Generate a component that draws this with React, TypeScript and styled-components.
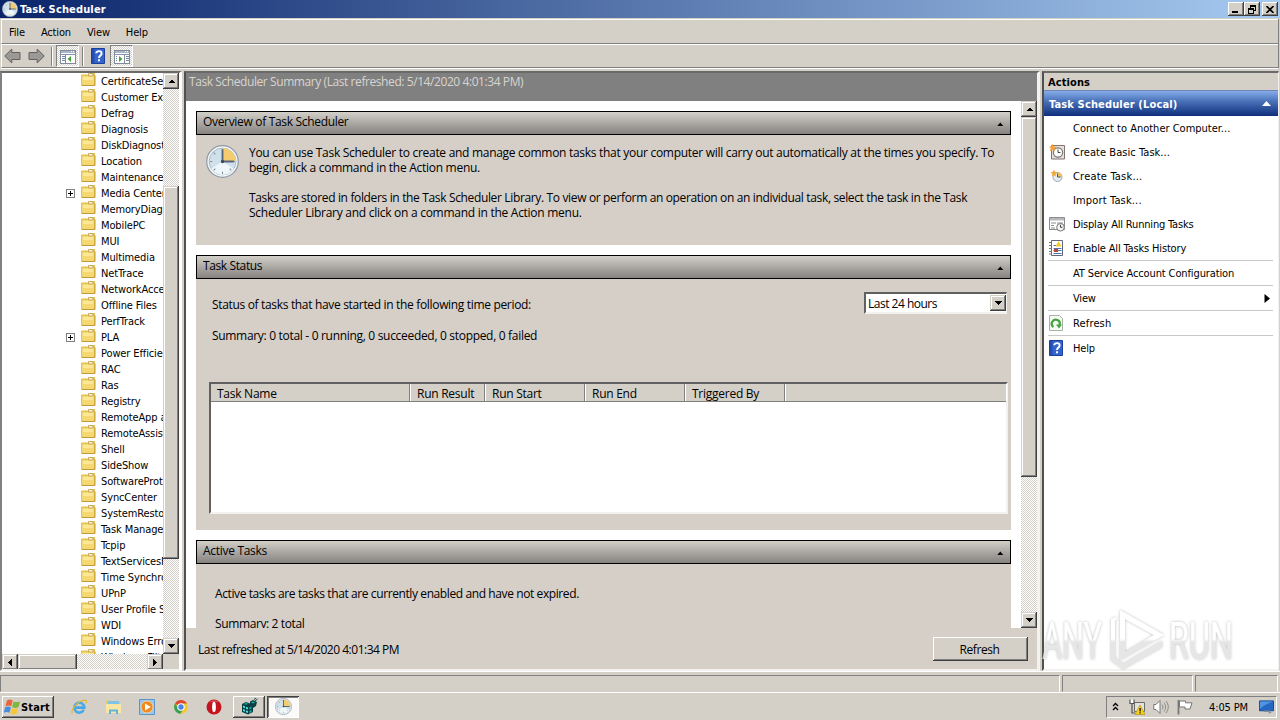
import React from "react";
import styled, { createGlobalStyle, css } from "styled-components";

const face = "#d4d0c8";

const GlobalStyle = createGlobalStyle`
    * {
        box-sizing: border-box;
    }

    body {
        margin: 0;
        overflow: hidden;
        background: ${face};
        color: #000;
        font-family: "DejaVu Sans Condensed", "DejaVu Sans", sans-serif;
        font-size: 11px;
        line-height: 14px;
    }

    svg {
        display: block;
        flex: none;
    }
`;

const raised = css`
    background: ${face};
    box-shadow: inset -1px -1px #404040, inset 1px 1px ${face}, inset -2px -2px #808080, inset 2px 2px #fff;
`;

const pushed = css`
    background: ${face};
    box-shadow: inset -1px -1px #404040, inset 1px 1px #fff, inset -2px -2px #808080;
`;

const dither = css`
    background: repeating-conic-gradient(#fff 0 25%, ${face} 0 50%) 0 0 / 2px 2px;
`;

const Desktop = styled.div`
    display: flex;
    flex-direction: column;
    width: 1280px;
    height: 720px;
    overflow: hidden;
    background: ${face};
`;

const Label = styled.span<{ $track?: number }>`
    padding-top: 2px;
    white-space: nowrap;
    letter-spacing: ${(p) => p.$track ?? -0.12}px;
`;

const UiLabel = styled(Label)`
    padding-top: 0;
    font-family: "Open Sans", "Noto Sans", sans-serif;
    font-size: 12px;
    line-height: 15px;
`;

/* title bar */

const TitleBar = styled.header`
    display: flex;
    align-items: center;
    height: 18px;
    padding: 0 2px;
    background: linear-gradient(90deg, #0a246a, #a6caf0);
    color: #fff;
    font-weight: bold;
`;

const TitleText = styled(Label)`
    margin-left: 2px;
    flex: 1;
`;

const CaptionButton = styled.span<{ $gap?: number }>`
    ${pushed}
    display: flex;
    align-items: center;
    justify-content: center;
    width: 16px;
    height: 14px;
    margin-left: ${(p) => p.$gap ?? 0}px;
`;

/* menu and toolbar */

const MenuBar = styled.nav`
    display: flex;
    align-items: center;
    gap: 16px;
    height: 25px;
    margin: 1px 2px 0 1px;
    padding-left: 7px;
    border: 1px solid #fff;
    border-width: 1px 0 0 1px;
    border-bottom: 1px solid #808080;
    box-shadow: 1px 0 #808080;
`;

const ToolBar = styled.div`
    display: flex;
    align-items: center;
    height: 24px;
    margin: 0 2px 0 1px;
    padding-left: 2px;
    border: 1px solid #fff;
    border-width: 1px 0 0 1px;
    border-bottom: 1px solid #808080;
    box-shadow: 1px 0 #808080, 0 1px #fff;
`;

const ToolGap = styled.span<{ $w: number }>`
    width: ${(p) => p.$w}px;
`;

const ToolSeparator = styled.span`
    width: 2px;
    height: 19px;
    border-left: 1px solid #808080;
    border-right: 1px solid #fff;
`;

const ToggleButton = styled.span`
    display: flex;
    align-items: center;
    justify-content: center;
    width: 23px;
    height: 22px;
    padding: 2px 0 0 1px;
    border: 1px solid;
    border-color: #808080 #fff #fff #808080;
    ${dither}
`;

/* panes */

const Panes = styled.main`
    display: flex;
    height: 600px;
    margin-top: 3px;
    padding-right: 1px;
`;

const Sunken = styled.section`
    display: flex;
    flex-direction: column;
    border: 2px solid;
    border-color: #6a6a6a #f4f2ee #f4f2ee #505050;
    overflow: hidden;
`;

const TreePane = styled(Sunken)`
    width: 182px;
    border-left-color: #808080;
    border-right-width: 3px;
    border-right-color: #fff;
`;

const TreeTop = styled.div`
    display: flex;
    height: 581px;
`;

const TreeList = styled.ul`
    width: 161px;
    margin: 0;
    padding: 0;
    list-style: none;
    overflow: hidden;
    background: #fff;
`;

const TreeItem = styled.li`
    display: grid;
    grid-template-columns: 64px 15px 20px auto;
    align-items: center;
    height: 16px;
    white-space: nowrap;

    .folder {
        margin-top: -4px;
    }
`;

const Expander = styled.span`
    display: flex;
    align-items: center;
    justify-content: center;
    width: 9px;
    height: 9px;
    border: 1px solid #808080;
`;

const VScroll = styled.div`
    display: flex;
    flex-direction: column;
    width: 16px;
    flex: none;
    ${dither}
`;

const HScroll = styled.div`
    display: flex;
    width: 161px;
    height: 16px;
    ${dither}
`;

const ScrollButton = styled.span`
    ${raised}
    display: flex;
    align-items: center;
    justify-content: center;
    width: 16px;
    height: 16px;
    flex: none;
`;

const Thumb = styled.span<{ $before?: number; $size: number; $across?: boolean }>`
    ${raised}
    flex: none;
    ${(p) =>
        p.$across
            ? css`
                  width: ${p.$size}px;
                  height: 16px;
              `
            : css`
                  width: 16px;
                  height: ${p.$size}px;
                  margin-top: ${p.$before ?? 0}px;
              `}
`;

const Spring = styled.span`
    flex: 1;
`;

const SummaryPane = styled(Sunken)`
    width: 856px;
    margin-left: 2px;
    border-right-width: 3px;
`;

const SummaryTitle = styled.div`
    height: 28px;
    flex: none;
    padding: 1px 3px;
    background: #808080;
    color: #d8d5cf;
`;

const SummaryScroll = styled.div`
    display: flex;
    height: 527px;
    flex: none;
    background: #fff;
`;

const Sections = styled.div`
    display: flex;
    flex-direction: column;
    gap: 10px;
    flex: 1;
    padding: 10px 10px 0;
    overflow: hidden;
`;

const Section = styled.article<{ $height: number }>`
    height: ${(p) => p.$height}px;
    flex: none;
    background: #d5cfc8;
`;

const SectionHead = styled.h2`
    display: flex;
    align-items: center;
    justify-content: space-between;
    height: 24px;
    margin: 0;
    padding: 0 6px 3px;
    border: 1px solid #000;
    background: linear-gradient(#d2cfc8, #858280);
    font-weight: normal;

    svg {
        margin-top: 4px;
    }
`;

const Overview = styled.div`
    display: flex;
    gap: 10px;
    padding: 10px;
`;

const Prose = styled.div`
    display: flex;
    flex-direction: column;
    gap: 15px;
`;

const Paragraph = styled.div`
    display: flex;
    flex-direction: column;
`;

const StatusLine = styled.div`
    display: flex;
    align-items: flex-end;
    justify-content: space-between;
    padding: 13px 4px 0 16px;
    height: 35px;

    > span {
        padding-bottom: 2px;
    }
`;

const TextLine = styled.div<{ $top: number; $left: number }>`
    padding: ${(p) => p.$top}px 0 0 ${(p) => p.$left}px;
    line-height: 15px;
`;

const Combo = styled.div`
    display: flex;
    align-items: center;
    justify-content: space-between;
    width: 143px;
    height: 22px;
    padding-left: 2px;
    border: 2px solid;
    border-right-width: 1px;
    border-color: #606060 #f4f2ee #f4f2ee #606060;
    background: #fff;
`;

const Grid = styled.div`
    height: 132px;
    margin: 38px 3px 0 13px;
    border: 2px solid;
    border-color: #606060 #f4f2ee #f4f2ee #606060;
    background: #fff;
`;

const GridHead = styled.div`
    display: grid;
    grid-template-columns: 199px 75px 100px 100px 100px 1fr;
    height: 18px;
    background: ${face};
    border-bottom: 1px solid #808080;
`;

const GridCell = styled.span`
    display: flex;
    align-items: center;
    padding: 2px 0 0 7px;
    border-right: 1px solid #808080;
    box-shadow: 1px 0 #fff;

    &:first-child {
        padding-left: 6px;
    }

    &:last-child {
        border: 0;
    }
`;

const SummaryFooter = styled.footer`
    display: flex;
    align-items: center;
    justify-content: space-between;
    flex: 1;
    padding: 1px 9px 0 12px;
    background: #d5cfc8;
`;

const PushButton = styled.span`
    ${pushed}
    display: flex;
    align-items: center;
    justify-content: center;
    width: 95px;
    height: 24px;
    padding-right: 2px;
`;

/* actions */

const ActionsPane = styled(Sunken)`
    flex: 1;
    margin-left: 2px;
    border-right-width: 1px;
    background: #fff;
`;

const ActionsTitle = styled.div`
    height: 17px;
    padding: 3px 4px 0;
    background: ${face};
    font-weight: bold;
`;

const ActionsGroup = styled.div`
    display: flex;
    align-items: center;
    justify-content: space-between;
    height: 26px;
    padding: 0 7px 0 5px;
    border-top: 1px solid #6d86b4;
    background: linear-gradient(#86ace8, #4a73ba 40%, #0f2f7c);
    color: #fff;
    font-weight: bold;
`;

const ActionRow = styled.div<{ $ruled?: boolean }>`
    display: grid;
    grid-template-columns: 24px 1fr auto;
    align-items: center;
    height: ${(p) => (p.$ruled ? 25 : 24)}px;
    margin: 0 5px 0 4px;
    padding: 0 3px 0 1px;
    border-bottom: ${(p) => (p.$ruled ? "1px solid #c8c8c8" : "0")};
`;

/* status bar */

const StatusBar = styled.div`
    display: grid;
    grid-template-columns: 1060px 131px 83px;
    gap: 2px;
    height: 22px;
    padding-top: 3px;
    border-top: 1px solid #fff;
    border-bottom: 1px solid #fff;
`;

const StatusCell = styled.span`
    border: 1px solid;
    border-color: #808080 #fff ${face} #808080;
`;

/* taskbar */

const TaskBar = styled.div`
    display: flex;
    align-items: center;
    height: 27px;
    padding: 2px 3px 2px 2px;
`;

const StartButton = styled.span`
    ${pushed}
    display: flex;
    align-items: center;
    width: 52px;
    height: 22px;
    padding-left: 2px;
    font-weight: bold;
`;

const QuickLaunch = styled.div`
    display: flex;
    align-items: center;
    gap: 17.5px;
    margin-left: 17px;
    width: 162px;
`;

const TaskButton = styled.span<{ $active?: boolean }>`
    ${pushed}
    display: flex;
    align-items: center;
    justify-content: center;
    width: 32px;
    height: 22px;
    margin-right: 2px;
    ${(p) =>
        p.$active &&
        css`
            background: #fbfaf8;
            box-shadow: inset 1px 1px #404040, inset -1px -1px #fff, inset 2px 2px #808080;
        `}
`;

const Tray = styled.div`
    display: flex;
    align-items: center;
    width: 171px;
    height: 22px;
    margin-left: auto;
    padding-left: 5px;
    border: 1px solid;
    border-color: #808080 #fff #fff #808080;

    svg + svg {
        margin-left: 10px;
    }

    svg + svg + svg {
        margin-left: 8px;
    }
`;

const Clock = styled(Label)`
    margin: 0 11px 0 16px;
`;

const Watermark = styled.svg`
    position: absolute;
    left: 1040px;
    top: 600px;
    pointer-events: none;
`;

/* icons */

type Dir = "up" | "down" | "left" | "right";
const arrows: Record<Dir, string> = {
    up: "M0 4h7L3.5 .5z",
    down: "M0 0h7L3.5 3.8z",
    left: "M4 0v7L.4 3.5z",
    right: "M0 0v7l3.7-3.5z",
};

const Arrow = ({ dir }: { dir: Dir }) => (
    <svg width={dir === "up" || dir === "down" ? 7 : 4} height={dir === "up" || dir === "down" ? 4 : 7} shapeRendering="crispEdges">
        <path d={arrows[dir]} />
    </svg>
);

const MenuArrow = () => (
    <svg width="6" height="9"><path d="M.5 0v9L6 4.5z" /></svg>
);

const Chevron = () => (
    <svg width="7" height="4"><path d="M.3 4h6L3.3 .6z" /></svg>
);

const Folder = () => (
    <svg className="folder" width="15" height="15" viewBox="0 0 15 15">
        <path d="M1 2.5h7.5l1-1.5H14v12.5H1z" fill="#e6c34f" />
        <path d="M1 4h12v9H1z" fill="#f3d873" />
        <path d="M2 5h10v3H2z" fill="#fbe896" />
        <path d="M7.5 1.5H12V4H7.5z" fill="#f7efcf" stroke="#b99a3c" strokeWidth=".7" />
        <path d="M.5 13.5H14V3.5" fill="none" stroke="#c09a35" />
        <path d="M.5 2.5v11" stroke="#e0c268" />
    </svg>
);

const ClockIcon = ({ size }: { size: number }) => (
    <svg width={size} height={size} viewBox="0 0 32 32">
        <circle cx="16" cy="16" r="15.3" fill="#f4f6f8" stroke="#8d99a5" strokeWidth="1.2" />
        <circle cx="16" cy="16" r="13" fill="#cfe1ea" stroke="#9db1bf" strokeWidth=".8" />
        <path d="M5 23A13 13 0 0 0 27 23L16 16z" fill="#eef6fa" />
        <path d="M16 3a13 13 0 0 1 13 13H16z" fill="#f5cb70" />
        <path d="M16 4v2M16 26v2M4 16h2M26 16h2M7.5 7.5l1.5 1.5M7.5 24.5L9 23M24.5 24.5L23 23" stroke="#7b8d9a" />
        <path d="M16 4v13M15 16h12" stroke="#56657c" strokeWidth="1.8" />
        <circle cx="16" cy="16" r="1.6" fill="#3c485c" />
    </svg>
);

const BackArrow = ({ flip }: { flip?: boolean }) => (
    <svg width="17" height="16" viewBox="0 0 17 16">
        <path
            transform={flip ? "translate(17 0) scale(-1 1)" : undefined}
            d="M.8 8l7-7v3.5H16v7H7.8V15z"
            fill="#9b9995"
            stroke="#62605d"
            strokeLinejoin="round"
        />
    </svg>
);

const PaneIcon = ({ flip }: { flip?: boolean }) => (
    <svg width="16" height="14" viewBox="0 0 16 14" shapeRendering="crispEdges">
        <path d="M.5 .5h15v13H.5z" fill="#fff" stroke="#808b9c" />
        <path d="M1 1h14v2H1z" fill="#a9b4c6" />
        <path d="M11 1h1v1h-1zM13 1h1v1h-1z" fill="#fff" />
        <path d="M1 4.5h14" stroke="#8793a8" />
        {flip ? (
            <>
                <path d="M10.5 5v8" stroke="#808b9c" />
                <path d="M12 6.5h3M12 8.5h3M12 10.5h3M2 6.5h1M2 8.5h1M2 10.5h1" stroke="#7086ad" />
                <path d="M5 6v6l3.5-3z" fill="#43a336" shapeRendering="auto" />
            </>
        ) : (
            <>
                <path d="M5.5 5v8" stroke="#808b9c" />
                <path d="M2 6.5h3M2 8.5h3M2 10.5h3" stroke="#7086ad" />
                <path d="M11 6v6L7.5 9z" fill="#43a336" shapeRendering="auto" />
            </>
        )}
    </svg>
);

const HelpIcon = () => (
    <svg width="14" height="16" viewBox="0 0 14 16">
        <path d="M.5 .5h13v15H.5z" fill="#3465ce" stroke="#1c3f9c" />
        <path d="M1 1h2.5v14H1z" fill="#254fae" />
        <path d="M5.2 5.3C5.2 2.4 10.6 2.4 10.6 5.4 10.6 7.5 8 7.4 8 10" fill="none" stroke="#fff" strokeWidth="1.9" />
        <path d="M7 11.3h2v2H7z" fill="#fff" />
    </svg>
);

const BasicTaskIcon = () => (
    <svg width="16" height="16" viewBox="0 0 16 16">
        <path d="M2.5 1.5h13V15h-13z" fill="#e4e0de" stroke="#857370" />
        <circle cx="9" cy="8.5" r="4.6" fill="#fff" stroke="#777" strokeWidth="1.2" />
        <path d="M9 5.5v3h2.5" fill="none" stroke="#444" />
        <path d="M3.5 -.5l1 2.7L8 3 5.4 4.6 6 7.600 3.500 6 .8 7.200 1.800 4.400 -.2 2.400 2.400 2.400z" fill="#f2a33c" />
    </svg>
);

const TaskIcon = () => (
    <svg width="16" height="16" viewBox="0 0 16 16">
        <circle cx="8.5" cy="9" r="4.5" fill="#e4edf3" stroke="#9ca8b2" />
        <path d="M8.5 4.5A4.500 4.500 0 0 1 13 9H8.5z" fill="#f5c35c" />
        <path d="M8.5 5.5V9h3" fill="none" stroke="#555" />
        <path d="M5 1.500l1 2.200 2.500.5L6.500 6l.5 2.500L5 7.300 2.800 8.500l.5-2.700L1.500 4.300 4 3.800z" fill="#f2a93c" />
    </svg>
);

const RunningIcon = () => (
    <svg width="16" height="16" viewBox="0 0 16 16">
        <path d="M.5 1.5h15v12H.5z" fill="#fff" stroke="#8c8c8c" />
        <path d="M1 2h14v2.5H1z" fill="#b5b9be" />
        <path d="M2 7h5M2 9.5h3M2 12h4M8 7h6" stroke="#8c8c8c" />
        <circle cx="11.5" cy="11.3" r="3.8" fill="#f4f4f4" stroke="#777" />
        <path d="M11.5 8.8v2.5h2" fill="none" stroke="#444" />
    </svg>
);

const HistoryIcon = () => (
    <svg width="14" height="16" viewBox="0 0 14 16">
        <path d="M2.5 .5h11v15h-11z" fill="#fff" stroke="#5f6680" />
        <path d="M0 2.5h3M0 5.5h3M0 8.5h3M0 11.5h3M0 14h3" stroke="#777" />
        <path d="M4.5 5.5h3M4.5 8.5h8M4.5 10.5h8M4.5 13.5h8" stroke="#5470ab" />
        <path d="M9.5 1l3 5.5h-6z" fill="#f3cc2c" />
        <path d="M5 9h4v3H5z" fill="#b34a3a" />
    </svg>
);

const RefreshIcon = () => (
    <svg width="14" height="16" viewBox="0 0 14 16">
        <path d="M.5 .5h10l3 3v12H.5z" fill="#f6faf5" stroke="#a6b3a4" />
        <path d="M4.5 12A4 4 0 1 1 10.5 10" fill="none" stroke="#43a33c" strokeWidth="2.2" />
        <path d="M7 9.5h6l-3 4z" fill="#43a33c" />
    </svg>
);

const StartFlag = () => (
    <svg width="17" height="16" viewBox="0 0 17 16">
        <path d="M3 1.5c2-1.300 3.800-1.200 5.700 0L7.200 7.300C5.300 6.100 3.300 6.100 1.300 7.400z" fill="#e8663a" />
        <path d="M9.600 2.200c2 1.200 4.200 1.200 6.600 0l-1.700 5.800c-2.200 1.300-4.300 1.200-6.400 0z" fill="#7fb840" />
        <path d="M1 8.400c2-1.300 4-1.200 5.900 0l-1.500 5.400c-2-1.200-3.700-1.200-5.700 0z" fill="#4a8ddc" />
        <path d="M7.800 9c2.100 1.200 4.200 1.200 6.400 0l-1.600 5.500c-2.200 1.300-4.100 1.200-6.300 0z" fill="#f6c732" />
    </svg>
);

const IeIcon = () => (
    <svg width="16" height="16" viewBox="0 0 16 16">
        <path d="M12.8 10.8A5 5 0 1 1 13.3 8.6H4" fill="none" stroke="#46a8e6" strokeWidth="2.6" />
        <path d="M1.5 14.5C-1 11 7 1.5 14 1.2c2 .2 1.5 2.3.8 3.3" fill="none" stroke="#e3b63a" strokeWidth="1.2" />
    </svg>
);

const ExplorerIcon = () => (
    <svg width="17" height="16" viewBox="0 0 17 16">
        <path d="M1 3V1.5h5L7 3h8v11H1z" fill="#e7c765" />
        <path d="M3 2h11v5H3z" fill="#7fc4e4" />
        <path d="M1 5h15v9H1z" fill="#f8e6a2" />
        <path d="M4 15v-4.5h9V15h-2v-2.5H6V15z" fill="#62b4dd" />
    </svg>
);

const MediaIcon = () => (
    <svg width="16" height="16" viewBox="0 0 16 16">
        <path d="M.5 .5h15v15H.5z" fill="#9bc7ee" stroke="#5c94cb" />
        <circle cx="8" cy="8" r="6" fill="#f08a1d" stroke="#fbd9a5" strokeWidth=".8" />
        <path d="M6 4.5v7L11.8 8z" fill="#fff" />
    </svg>
);

const ChromeIcon = () => (
    <svg width="16" height="16" viewBox="0 0 16 16">
        <circle cx="8" cy="8" r="6.8" fill="#f5c928" />
        <path d="M8 8L2 4.5A6.9 6.9 0 0 1 14 4.6H8z" fill="#df4634" />
        <path d="M2 4.5A6.9 6.9 0 0 0 7.5 14.8L10.5 9.5 5.5 9z" fill="#39a058" />
        <circle cx="8" cy="8" r="3.2" fill="#4a84ea" stroke="#fff" strokeWidth="1.1" />
    </svg>
);

const OperaIcon = () => (
    <svg width="16" height="16" viewBox="0 0 16 16">
        <circle cx="8" cy="8" r="7.5" fill="#c4141d" />
        <path d="M3 3.5a7.5 7.5 0 0 1 10 0C11 2 5 2 3 3.5z" fill="#e87a7a" />
        <ellipse cx="8" cy="8" rx="1.9" ry="5.2" fill="#fff" />
    </svg>
);

const CubeIcon = () => (
    <svg width="17" height="17" viewBox="0 0 17 17">
        <path d="M1 6l4-2 4 1.5V3.5L12 2l4 2-1 4-3 2v4l-5 2.5L1 14z" fill="#0a3f42" />
        <path d="M2 7.5l2 .8v2l-2-.8zM5 8.7l2 .8v2l-2-.8zM2 11l2 .8v2L2 13zM5 12.2l2 .8v2l-2-.8z" fill="#4fe0dc" />
        <path d="M8.5 9.5l2-1v2l-2 1zM8.5 13l2-1v2l-2 1zM3 6l2-1 2 .8-2 1zM10 4.5l2-1 2 1-2 1z" fill="#1fb0b0" />
        <path d="M13 1.5L15 0M14 3l2.5-2" stroke="#0a3f42" />
    </svg>
);

const TrayExpand = () => (
    <svg width="7" height="9" viewBox="0 0 7 9">
        <path d="M1 4l2.5-2.5L6 4M1 8l2.5-2.5L6 8" fill="none" stroke="#000" strokeWidth="1.3" />
    </svg>
);

const NetworkIcon = () => (
    <svg width="16" height="16" viewBox="0 0 16 16">
        <path d="M5.5 3.5h10v9h-10z" fill="#e4e2dd" stroke="#6c6c6c" />
        <path d="M1 .5v4h4v-4M3 4.5V14h3" fill="none" stroke="#555" strokeWidth="1.2" />
        <path d="M1.8 .5V4h2.4V.5z" fill="#fff" />
        <path d="M11 6l5 9.5H6z" fill="#f8d21c" stroke="#a8860c" strokeWidth=".6" />
        <path d="M10.5 9h1.2v3.5h-1.2zM10.5 13.2h1.2v1.2h-1.2z" />
    </svg>
);

const SpeakerIcon = () => (
    <svg width="16" height="16" viewBox="0 0 16 16">
        <path d="M.8 5.500H3L7 1.500v13L3 10.500H.8z" fill="#fff" stroke="#777" />
        <path d="M9 5.500c1.200 1.500 1.200 3.500 0 5M11 3.500c2 2.700 2 6.300 0 9M13 2c3 3.500 3 8.500 0 12" fill="none" stroke="#8a8a8a" />
    </svg>
);

const FlagIcon = () => (
    <svg width="16" height="16" viewBox="0 0 16 16">
        <path d="M1.5 1v14.5" stroke="#777" strokeWidth="1.8" />
        <path d="M2.5 2h6v1.8H15L13 10H8V8H2.5z" fill="#fff" stroke="#777" />
    </svg>
);

const DesktopIcon = () => (
    <svg width="15" height="14" viewBox="0 0 16 14">
        <path d="M.5 .5h15V11H.5z" fill="#2468c4" stroke="#174688" />
        <path d="M1 1h14C10 3 4 6 1 9z" fill="#4f95e2" />
        <path d="M5 11.5h6V13h2" fill="none" stroke="#7f8fa8" strokeWidth="1.5" />
    </svg>
);

/* data */

const folders = [
    "CertificateServicesClient", "Customer Experience", "Defrag", "Diagnosis", "DiskDiagnostic", "Location",
    "Maintenance", "Media Center", "MemoryDiagnostic", "MobilePC", "MUI", "Multimedia", "NetTrace",
    "NetworkAccessProtection", "Offline Files", "PerfTrack", "PLA", "Power Efficiency", "RAC", "Ras", "Registry",
    "RemoteApp and Desktop", "RemoteAssistance", "Shell", "SideShow", "SoftwareProtection", "SyncCenter",
    "SystemRestore", "Task Manager", "Tcpip", "TextServicesFramework", "Time Synchronization", "UPnP",
    "User Profile Service", "WDI", "Windows Error Reporting", "Windows Filtering Platform",
];
const expandable = ["Media Center", "PLA"];

type Action = { text: string; icon?: React.ReactNode; ruled?: boolean; submenu?: boolean; track?: number };

const actions: Action[] = [
    { text: "Connect to Another Computer...", track: 0 },
    { text: "Create Basic Task...", icon: <BasicTaskIcon />, track: 0.05 },
    { text: "Create Task...", icon: <TaskIcon />, track: 0.2 },
    { text: "Import Task...", track: 0.15 },
    { text: "Display All Running Tasks", icon: <RunningIcon />, track: -0.18 },
    { text: "Enable All Tasks History", icon: <HistoryIcon />, ruled: true, track: -0.16 },
    { text: "AT Service Account Configuration", ruled: true },
    { text: "View", ruled: true, submenu: true, track: -0.2 },
    { text: "Refresh", icon: <RefreshIcon />, ruled: true, track: 0.15 },
    { text: "Help", icon: <HelpIcon />, track: -0.2 },
];

const columns = ["Task Name", "Run Result", "Run Start", "Run End", "Triggered By", ""];

const Heading = ({ text, track }: { text: string; track: number }) => (
    <SectionHead>
        <UiLabel $track={track}>{text}</UiLabel>
        <Chevron />
    </SectionHead>
);

const Tree = () => (
    <TreePane>
        <TreeTop>
            <TreeList>
                {folders.map((name) => (
                    <TreeItem key={name}>
                        <span />
                        {expandable.includes(name) ? (
                            <Expander>
                                <svg width="5" height="5"><path d="M0 2h5v1H0zM2 0h1v5H2z" /></svg>
                            </Expander>
                        ) : (
                            <span />
                        )}
                        <Folder />
                        <Label>{name}</Label>
                    </TreeItem>
                ))}
            </TreeList>
            <VScroll>
                <ScrollButton><Arrow dir="up" /></ScrollButton>
                <Thumb $before={97} $size={373} />
                <Spring />
                <ScrollButton><Arrow dir="down" /></ScrollButton>
            </VScroll>
        </TreeTop>
        <HScroll>
            <ScrollButton><Arrow dir="left" /></ScrollButton>
            <Thumb $across $size={59} />
            <Spring />
            <ScrollButton><Arrow dir="right" /></ScrollButton>
        </HScroll>
    </TreePane>
);

const Summary = () => (
    <SummaryPane>
        <SummaryTitle>
            <UiLabel $track={-0.42}>Task Scheduler Summary (Last refreshed: 5/14/2020 4:01:34 PM)</UiLabel>
        </SummaryTitle>
        <SummaryScroll>
            <Sections>
                <Section $height={134}>
                    <Heading text="Overview of Task Scheduler" track={-0.32} />
                    <Overview>
                        <ClockIcon size={33} />
                        <Prose>
                            <Paragraph>
                                <UiLabel $track={-0.29}>
                                    You can use Task Scheduler to create and manage common tasks that your computer will carry out automatically at the times you specify. To
                                </UiLabel>
                                <UiLabel $track={-0.28}>begin, click a command in the Action menu.</UiLabel>
                            </Paragraph>
                            <Paragraph>
                                <UiLabel $track={-0.35}>
                                    Tasks are stored in folders in the Task Scheduler Library. To view or perform an operation on an individual task, select the task in the Task
                                </UiLabel>
                                <UiLabel $track={-0.27}>Scheduler Library and click on a command in the Action menu.</UiLabel>
                            </Paragraph>
                        </Prose>
                    </Overview>
                </Section>
                <Section $height={275}>
                    <Heading text="Task Status" track={-0.38} />
                    <StatusLine>
                        <UiLabel $track={-0.33}>Status of tasks that have started in the following time period:</UiLabel>
                        <Combo>
                            <UiLabel $track={-0.5}>Last 24 hours</UiLabel>
                            <ScrollButton><Arrow dir="down" /></ScrollButton>
                        </Combo>
                    </StatusLine>
                    <TextLine $top={14} $left={16}>
                        <UiLabel $track={-0.31}>Summary: 0 total - 0 running, 0 succeeded, 0 stopped, 0 failed</UiLabel>
                    </TextLine>
                    <Grid>
                        <GridHead>
                            {columns.map((c) => (
                                <GridCell key={c}><UiLabel $track={-0.26}>{c}</UiLabel></GridCell>
                            ))}
                        </GridHead>
                    </Grid>
                </Section>
                <Section $height={140}>
                    <Heading text="Active Tasks" track={-0.3} />
                    <TextLine $top={22} $left={19}>
                        <UiLabel $track={-0.4}>Active tasks are tasks that are currently enabled and have not expired.</UiLabel>
                    </TextLine>
                    <TextLine $top={14} $left={19}>
                        <UiLabel $track={-0.38}>Summary: 2 total</UiLabel>
                    </TextLine>
                </Section>
            </Sections>
            <VScroll>
                <ScrollButton><Arrow dir="up" /></ScrollButton>
                <Thumb $size={360} />
                <Spring />
                <ScrollButton><Arrow dir="down" /></ScrollButton>
            </VScroll>
        </SummaryScroll>
        <SummaryFooter>
            <UiLabel $track={-0.48}>Last refreshed at 5/14/2020 4:01:34 PM</UiLabel>
            <PushButton><UiLabel $track={-0.4}>Refresh</UiLabel></PushButton>
        </SummaryFooter>
    </SummaryPane>
);

const Actions = () => (
    <ActionsPane>
        <ActionsTitle><Label $track={0.09}>Actions</Label></ActionsTitle>
        <ActionsGroup>
            <Label $track={0.14}>Task Scheduler (Local)</Label>
            <svg width="9" height="5"><path d="M0 5h9L4.5 0z" fill="#fff" /></svg>
        </ActionsGroup>
        {actions.map((a) => (
            <ActionRow key={a.text} $ruled={a.ruled}>
                <span>{a.icon}</span>
                <Label $track={a.track}>{a.text}</Label>
                {a.submenu && <MenuArrow />}
            </ActionRow>
        ))}
    </ActionsPane>
);

export default function App() {
    return (
        <Desktop>
            <GlobalStyle />
            <TitleBar>
                <ClockIcon size={16} />
                <TitleText $track={0.14}>Task Scheduler</TitleText>
                <CaptionButton>
                    <svg width="8" height="8"><path d="M0 6h6v2H0z" /></svg>
                </CaptionButton>
                <CaptionButton>
                    <svg width="9" height="9" shapeRendering="crispEdges">
                        <path d="M2.5 3V.5h5v5H6M2 1.5h6M.5 3.5h5v5h-5zM0 4.5h6" fill="none" stroke="#000" />
                    </svg>
                </CaptionButton>
                <CaptionButton $gap={2}>
                    <svg width="8" height="7"><path d="M.5 0l7 7M7.5 0l-7 7" stroke="#000" strokeWidth="1.6" /></svg>
                </CaptionButton>
            </TitleBar>
            <MenuBar>
                {["File", "Action", "View", "Help"].map((m) => (
                    <Label key={m} $track={-0.15}>{m}</Label>
                ))}
            </MenuBar>
            <ToolBar>
                <BackArrow />
                <ToolGap $w={7} />
                <BackArrow flip />
                <ToolGap $w={6} />
                <ToolSeparator />
                <ToolGap $w={3} />
                <ToggleButton><PaneIcon /></ToggleButton>
                <ToolGap $w={3} />
                <ToolSeparator />
                <ToolGap $w={7} />
                <HelpIcon />
                <ToolGap $w={5} />
                <ToggleButton><PaneIcon flip /></ToggleButton>
            </ToolBar>
            <Panes>
                <Tree />
                <Summary />
                <Actions />
            </Panes>
            <StatusBar>
                <StatusCell />
                <StatusCell />
                <StatusCell />
            </StatusBar>
            <TaskBar>
                <StartButton>
                    <StartFlag />
                    <Label $track={0.15}>Start</Label>
                </StartButton>
                <QuickLaunch>
                    <IeIcon />
                    <ExplorerIcon />
                    <MediaIcon />
                    <ChromeIcon />
                    <OperaIcon />
                </QuickLaunch>
                <TaskButton><CubeIcon /></TaskButton>
                <TaskButton $active><ClockIcon size={17} /></TaskButton>
                <Tray>
                    <TrayExpand />
                    <NetworkIcon />
                    <SpeakerIcon />
                    <FlagIcon />
                    <Clock>4:05 PM</Clock>
                    <DesktopIcon />
                </Tray>
            </TaskBar>
            <Watermark width="200" height="75">
                <defs>
                    <linearGradient id="fade" gradientUnits="userSpaceOnUse" x1="0" y1="0" x2="0" y2="75">
                        <stop offset=".52" stopColor="#fff" />
                        <stop offset=".56" stopColor="#e2e2e2" />
                    </linearGradient>
                    <filter id="glow" x="-10%" y="-20%" width="120%" height="140%">
                        <feDropShadow dx="0" dy="0" stdDeviation="1.8" floodColor="#666" floodOpacity=".55" />
                    </filter>
                </defs>
                <g filter="url(#glow)" fill="url(#fade)" opacity=".85" fontFamily="Roboto, sans-serif" fontSize="51">
                    <text x="2" y="59" textLength="60" lengthAdjust="spacingAndGlyphs">ANY</text>
                    <text x="129" y="59" textLength="64" lengthAdjust="spacingAndGlyphs">RUN</text>
                    <path d="M80 10l44 25-44 25zM85 19v33l29-17z" fillRule="evenodd" />
                    <path d="M77 17l-6 2v41l12 9 39-22v-6L83 64l-8-6V21z" />
                </g>
            </Watermark>
        </Desktop>
    );
}
